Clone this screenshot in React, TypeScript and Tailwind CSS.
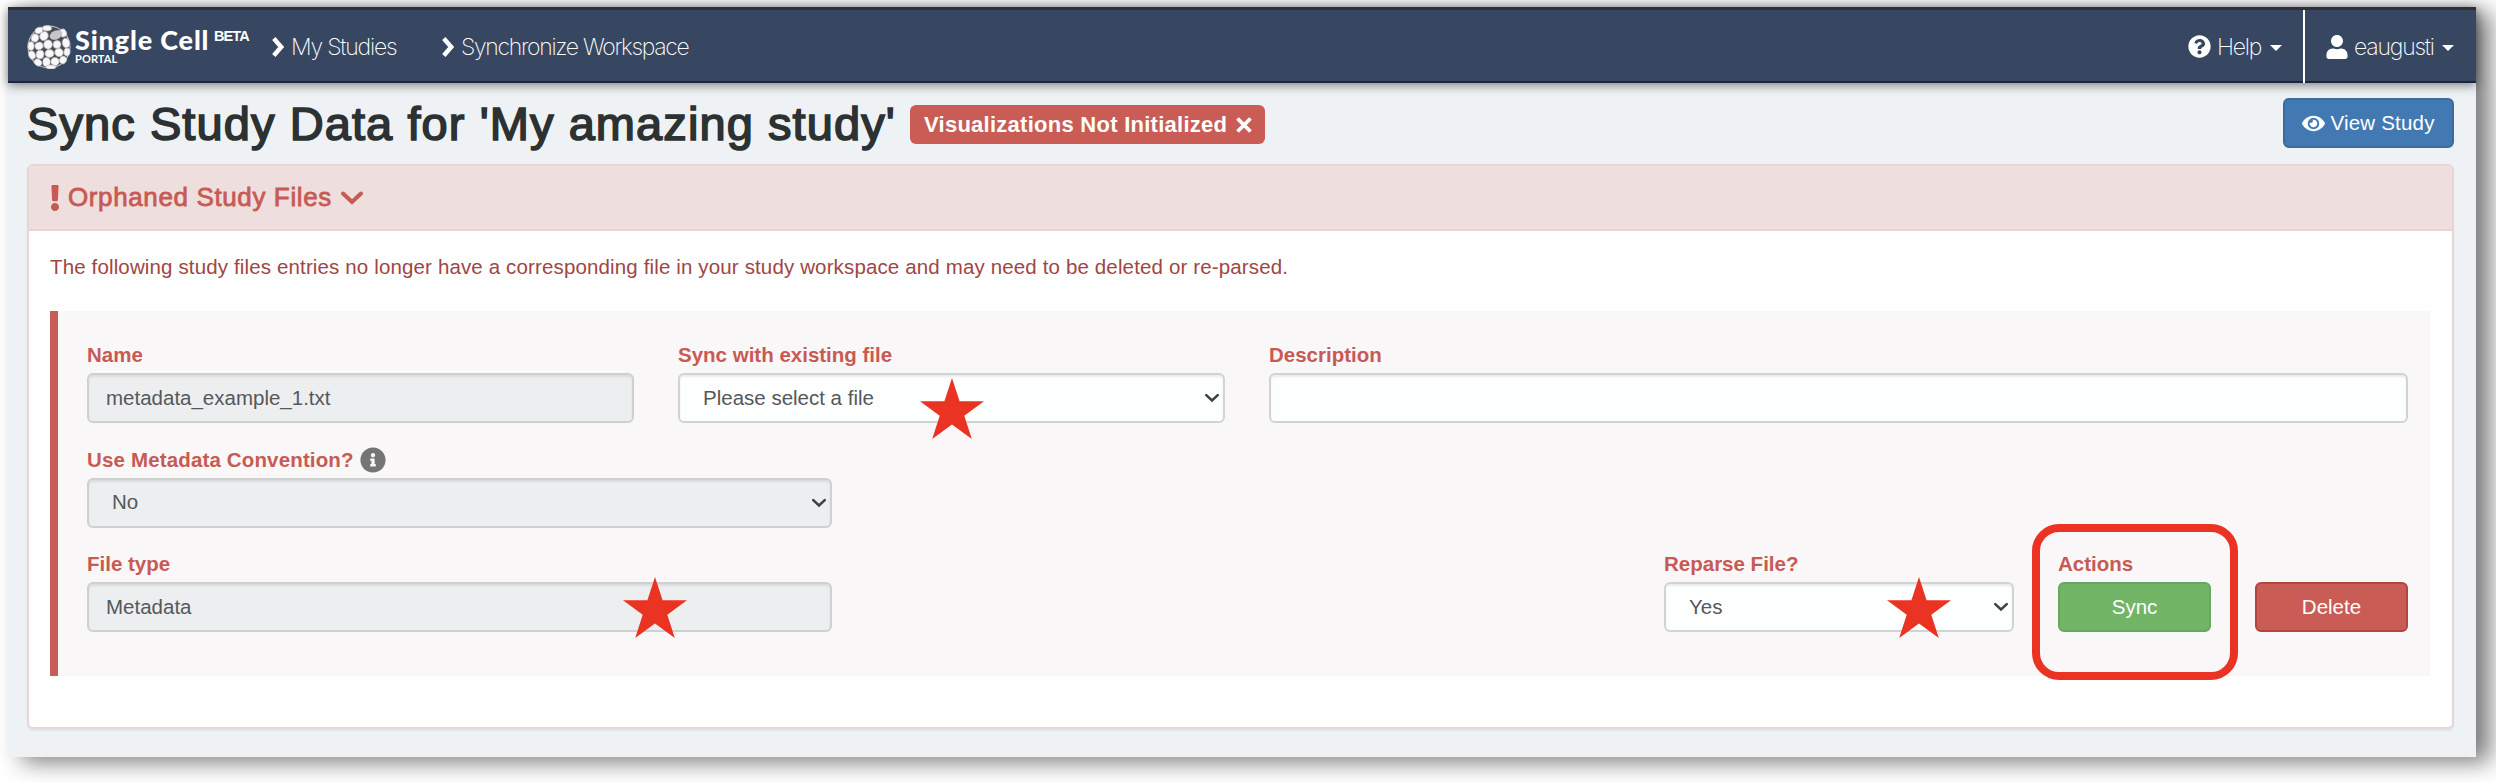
import React from "react";
import { FaQuestionCircle, FaUser, FaEye, FaInfoCircle, FaExclamation } from "react-icons/fa";

const Caret = () => (
  <span className="mt-[3px] h-0 w-0 border-x-[6px] border-t-[6px] border-x-transparent border-t-white" />
);

const Chevron = ({ className }: { className: string }) => (
  <svg viewBox="0 0 12 20" className={className} fill="none" stroke="currentColor" strokeWidth="4.4">
    <path d="M1.8 1.5 L9.2 10 L1.8 18.5" />
  </svg>
);

const Down = ({ className }: { className: string }) => (
  <svg viewBox="0 0 22 14" className={className} fill="none" stroke="currentColor" strokeWidth="4">
    <path d="M2 2.5 L11 11 L20 2.5" strokeLinecap="round" />
  </svg>
);

const Star = ({ className }: { className: string }) => (
  <svg viewBox="0 0 64 61" className={className} fill="#ea3323">
    <path d="M32 0 L39.6 23.3 L64 23.3 L44.3 37.7 L51.8 61 L32 46.6 L12.2 61 L19.7 37.7 L0 23.3 L24.4 23.3 Z" />
  </svg>
);

const cells: [number, number, number, number, number][] = [
  [12, 5.5, 3.6, 2.6, -20], [20, 3.2, 4, 2.2, 0], [36, 8, 3, 3.6, -30],
  [8, 13, 3.2, 3.6, 20], [17, 11, 3.6, 4.2, 30], [4, 21, 2.6, 3.8, 0],
  [12, 21, 3.6, 3.2, -20], [21, 19.5, 3.8, 4, 10], [30, 19.5, 3.4, 3.4, 0],
  [39, 18, 3.2, 4.4, -10], [5, 30, 2.8, 3.8, -20], [13, 29.5, 3.4, 3.8, 10],
  [22.5, 28.5, 4, 3.4, 0], [32, 27.5, 3.8, 3.6, 30], [40, 27, 2.6, 3.4, 10],
  [11, 37.5, 3.6, 2.8, 35], [19.5, 37, 3.2, 4, 0], [28, 36.5, 3.6, 3.4, 20],
  [36, 35, 3, 3.4, 35], [24, 42, 4.5, 1.6, 0],
];

const Logo = () => (
  <svg viewBox="0 0 44 44" className="h-11 w-11 shrink-0">
    <circle cx="22" cy="22" r="21.5" fill="#c9cbce" />
    <circle cx="22" cy="22" r="20.5" fill="#4b4c50" />
    {cells.map(([x, y, rx, ry, a], i) => (
      <ellipse key={i} cx={x} cy={y} rx={rx + 0.5} ry={ry + 0.5} fill="#f8f8f8" stroke="#b9babc" strokeWidth="0.7" transform={`rotate(${a} ${x} ${y})`} />
    ))}
    <ellipse cx="29" cy="10" rx="6.6" ry="4.4" fill="#c4c5c7" transform="rotate(-25 29 10)" />
  </svg>
);

const Label = ({ children }: { children: React.ReactNode }) => (
  <div className="flex h-[26px] items-center whitespace-nowrap pt-[6px] text-[20.5px] leading-[26px] font-bold text-[#c85a54]">
    {children}
  </div>
);

const Box = ({ text, select, disabled }: { text?: string; select?: boolean; disabled?: boolean }) => (
  <div
    className={`mt-[8px] flex h-[50px] items-center justify-between rounded-[6px] border-2 text-[20.5px] text-[#55585a] shadow-[inset_0_2px_2px_rgba(0,0,0,0.08)] ${
      disabled ? "border-[#cfd1d1] bg-[#eceeef]" : "border-[#d2d3d4] bg-[#fdfefe]"
    } ${select ? "pr-[4px] pl-[23px]" : "px-[17px]"}`}
  >
    <span>{text}</span>
    {select && <Down className="h-[10px] w-[14px] text-[#3f4243]" />}
  </div>
);

export default function App() {
  return (
    <div className="h-[782px] w-[2496px] overflow-hidden bg-white pt-[7px] pl-[8px] font-['Liberation_Sans',Arial,sans-serif]">
      <div className="flex h-[750px] w-[2468px] flex-col bg-[#eef2f5] shadow-[14px_5px_22px_rgba(0,0,0,0.52)]">
        <nav className="flex h-[76px] shrink-0 items-stretch justify-between border-t-[3px] border-b-2 border-t-[#2f3136] border-b-[#1d2539] bg-[#374761] text-white shadow-[0_2px_10px_rgba(0,0,0,0.5)]">
          <div className="flex items-center pt-[2px] pl-[19px]">
            <Logo />
            <div className="ml-[4px] flex h-[44px] w-[136px] flex-col">
              <div className="pt-[2px] font-['Lato'] text-[27px] leading-[26px] font-black tracking-[0.85px] whitespace-nowrap">Single Cell</div>
              <div className="font-['Lato'] text-[11px] leading-[12px] font-bold tracking-[0.1px]">PORTAL</div>
            </div>
            <div className="-mt-[19px] ml-[3px] w-[36px] text-[14.5px] font-bold tracking-[-0.9px]">BETA</div>
            <Chevron className="ml-[22px] h-[20px] w-[12px]" />
            <span className="ml-[7px] w-[151px] pt-[2px] font-['Inter'] text-[23px] font-extralight tracking-[-1.2px] whitespace-nowrap">My Studies</span>
            <Chevron className="h-[20px] w-[12px]" />
            <span className="ml-[7px] pt-[2px] font-['Inter'] text-[23px] font-extralight tracking-[-1.32px] whitespace-nowrap">Synchronize Workspace</span>
          </div>
          <div className="flex font-['Inter'] text-[23px] font-extralight tracking-[-1.2px]">
            <div className="flex items-center pt-[2px]">
              <FaQuestionCircle className="h-[23px] w-[23px]" />
              <span className="mr-[9px] ml-[6px] w-[44px] pt-[2px]">Help</span>
              <Caret />
            </div>
            <div className="-mb-[2px] ml-[21px] w-[2px] bg-white" />
            <div className="flex items-center pt-[2px] pr-[22px] pl-[21px]">
              <FaUser className="h-[24px] w-[22px]" />
              <span className="mr-[8px] ml-[6px] w-[80px] pt-[2px]">eaugusti</span>
              <Caret />
            </div>
          </div>
        </nav>

        <div className="flex h-[81px] shrink-0 items-center justify-between pr-[22px] pl-[19px]">
          <div className="flex items-center pt-[2px]">
            <h1 className="w-[868px] text-[47px] font-normal tracking-[1.08px] whitespace-nowrap text-[#2c3132] [-webkit-text-stroke:1.6px_#2c3132]">
              Sync Study Data for 'My amazing study'
            </h1>
            <div className="ml-[15px] flex h-[39px] w-[355px] items-center rounded-[6px] bg-[#c95c55] pl-[14px] text-[22px] font-bold whitespace-nowrap text-white">
              <span className="w-[306px] tracking-[0.26px]">Visualizations Not Initialized</span>
              <svg viewBox="0 0 16 16" className="ml-[6px] h-[16px] w-[16px]" stroke="#fff" strokeWidth="3.8">
                <path d="M1.5 1.5 L14.5 14.5 M14.5 1.5 L1.5 14.5" />
              </svg>
            </div>
          </div>
          <div className="mb-[1px] flex h-[50px] w-[171px] items-center justify-center gap-[5px] rounded-[6px] border-2 border-[#3a6b9c] bg-[#4279b3] text-[20.5px] tracking-[0.2px] whitespace-nowrap text-white">
            <FaEye className="h-[23px] w-[23px]" />
            View Study
          </div>
        </div>

        <section className="mr-[22px] ml-[19px] flex h-[565px] flex-col rounded-[6px] border-2 border-[#e9d4d7] bg-[#fefefe] shadow-[0_2px_2px_rgba(0,0,0,0.06)]">
          <header className="flex h-[65px] shrink-0 items-center rounded-t-[4px] border-b-2 border-[#ebd2d5] bg-[#eedfde] pl-[21px] text-[#c85a54]">
            <FaExclamation className="h-[26px] w-[10px]" />
            <span className="ml-[8px] text-[26px] tracking-[0.62px] whitespace-nowrap [-webkit-text-stroke:0.8px_#c85a54]">Orphaned Study Files</span>
            <Down className="ml-[9px] h-[14px] w-[22px]" />
          </header>
          <p className="mt-[23px] ml-[21px] text-[20.5px] leading-[26px] tracking-[0.14px] whitespace-nowrap text-[#a04643]">
            The following study files entries no longer have a corresponding file in your study workspace and may need to be deleted or re-parsed.
          </p>
          <div className="mt-[31px] mr-[22px] ml-[21px] flex h-[365px] shrink-0 flex-col border-l-[8px] border-[#c85d58] bg-[#f9f7f7] pt-[28px] pr-[22px] pl-[29px]">
            <div className="flex h-[104.5px] shrink-0 gap-[44px]">
              <div className="w-[547px]"><Label>Name</Label><Box text="metadata_example_1.txt" disabled /></div>
              <div className="relative w-[547px]">
                <Label>Sync with existing file</Label>
                <Box text="Please select a file" select />
                <Star className="absolute top-[39px] left-[242px] h-[61px] w-[64px]" />
              </div>
              <div className="flex-1"><Label>Description</Label><Box /></div>
            </div>
            <div className="h-[104.5px] w-[745px] shrink-0">
              <Label>
                <span className="tracking-[0.15px]">Use Metadata Convention?</span>
                <FaInfoCircle className="ml-[6px] h-[26px] w-[26px] text-[#757575]" />
              </Label>
              <Box text="No" select disabled />
            </div>
            <div className="flex justify-between">
              <div className="relative w-[745px]">
                <Label>File type</Label>
                <Box text="Metadata" disabled />
                <Star className="absolute top-[29px] left-[536px] h-[61px] w-[64px]" />
              </div>
              <div className="flex gap-[44px]">
                <div className="relative w-[350px]">
                  <Label>Reparse File?</Label>
                  <Box text="Yes" select />
                  <Star className="absolute top-[29px] left-[223px] h-[61px] w-[64px]" />
                </div>
                <div className="relative w-[153px]">
                  <Label>Actions</Label>
                  <div className="mt-[8px] flex h-[50px] items-center justify-center rounded-[6px] border-2 border-[#68a75f] bg-[#73b567] text-[20.5px] text-white">Sync</div>
                  <div className="absolute -top-[24px] -left-[26px] h-[156px] w-[206px] rounded-[27px] border-8 border-[#ea3323]" />
                </div>
                <div className="w-[153px] pt-[34px]">
                  <div className="flex h-[50px] items-center justify-center rounded-[6px] border-2 border-[#b5443f] bg-[#c95c55] text-[20.5px] text-white">Delete</div>
                </div>
              </div>
            </div>
          </div>
        </section>
      </div>
    </div>
  );
}
